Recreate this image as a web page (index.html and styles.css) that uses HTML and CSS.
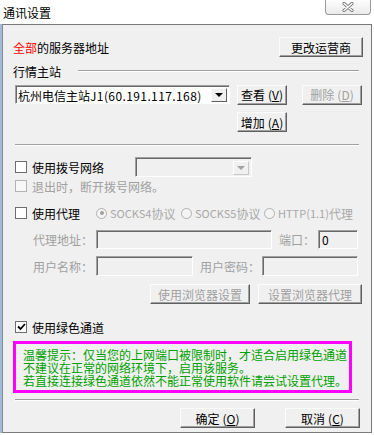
FILE: index.html
```html
<!DOCTYPE html>
<html lang="zh-CN">
<head>
  <meta charset="UTF-8">
  <title>通讯设置</title>
  <link rel="stylesheet" href="styles.css">
</head>
<body>

<div class="titlebar">
  <span class="title">通讯设置</span>
  <div class="close-btn">
    <svg width="14" height="10" viewBox="0 0 14 10">
      <path d="M3 1.5 L11 8.5 M11 1.5 L3 8.5" stroke="#7d7d7d" stroke-width="3.2" stroke-linecap="round" fill="none"/>
      <path d="M3 1.5 L11 8.5 M11 1.5 L3 8.5" stroke="#fff" stroke-width="1.4" stroke-linecap="round" fill="none"/>
    </svg>
  </div>
</div>

<div class="dialog">

  <!-- 服务器地址 -->
  <div class="row row-server">
    <span class="server-label"><span class="red">全部</span>的服务器地址</span>
    <div class="btn btn-carrier">更改运营商</div>
  </div>

  <div class="group-title">
    <span>行情主站</span>
    <div class="group-line"></div>
  </div>

  <div class="row row-select">
    <div class="combo combo-server">
      <span class="combo-text">杭州电信主站<span class="mono">J1(60.191.117.168)</span></span>
      <div class="combo-arrow"><span class="tri"></span></div>
    </div>
    <div class="btn btn-view">查看<span class="key">(<u>V</u>)</span></div>
    <div class="btn btn-delete disabled">删除<span class="key">(<u>D</u>)</span></div>
  </div>

  <div class="row row-add">
    <div class="btn btn-add">增加<span class="key">(<u>A</u>)</span></div>
  </div>

  <div class="separator"></div>

  <!-- 拨号 / 代理 -->
  <div class="row row-dial">
    <span class="check"></span>
    <span class="check-label">使用拨号网络</span>
    <div class="combo combo-dial disabled">
      <div class="combo-arrow"><span class="tri"></span></div>
    </div>
  </div>

  <div class="row row-exit disabled">
    <span class="check"></span>
    <span class="check-label">退出时，断开拨号网络。</span>
  </div>

  <div class="row row-proxy">
    <span class="check"></span>
    <span class="check-label">使用代理</span>
    <div class="radios disabled">
      <div class="radio-item r1"><span class="radio on"></span><span class="latin">SOCKS4</span>协议</div>
      <div class="radio-item r2"><span class="radio"></span><span class="latin">SOCKS5</span>协议</div>
      <div class="radio-item r3"><span class="radio"></span><span class="latin">HTTP(1.1)</span>代理</div>
    </div>
  </div>

  <div class="row row-addr">
    <span class="field-label disabled">代理地址：</span>
    <div class="input input-addr"></div>
    <span class="field-label port-label disabled">端口：</span>
    <div class="input input-port">0</div>
  </div>

  <div class="row row-user">
    <span class="field-label disabled">用户名称：</span>
    <div class="input input-user"></div>
    <span class="field-label pass-label disabled">用户密码：</span>
    <div class="input input-pass"></div>
  </div>

  <div class="row row-browser">
    <div class="btn btn-browser disabled">使用浏览器设置</div>
    <div class="btn btn-setbrowser disabled">设置浏览器代理</div>
  </div>

  <!-- 绿色通道 -->
  <div class="row row-green">
    <span class="check checked">
      <svg width="9" height="8" viewBox="0 0 9 8"><path d="M1 3.5 L3.5 6 L8 1" stroke="#000" stroke-width="1.8" fill="none"/></svg>
    </span>
    <span class="check-label">使用绿色通道</span>
  </div>

  <div class="tip">
    <div>温馨提示：仅当您的上网端口被限制时，才适合启用绿色通道</div>
    <div>不建议在正常的网络环境下，启用该服务。</div>
    <div>若直接连接绿色通道依然不能正常使用软件请尝试设置代理。</div>
  </div>

  <div class="separator"></div>

  <div class="row row-ok">
    <div class="btn btn-ok">确定<span class="key">(<u>O</u>)</span></div>
    <div class="btn btn-cancel">取消<span class="key">(<u>C</u>)</span></div>
  </div>

</div>

</body>
</html>
```

FILE: styles.css
```css
body {
  margin: 0;
  background: #fff;
  font-family: "Noto Sans CJK SC", "DejaVu Sans", sans-serif;
  font-size: 12px;
  color: #000;
  width: 374px;
  height: 435px;
  overflow: hidden;
}

/* 标题栏 */
.titlebar {
  height: 24px;
  display: flex;
  justify-content: space-between;
  align-items: center;
}
.title {
  margin-left: 3px;
  font-size: 12px;
}
.close-btn {
  align-self: flex-start;
  margin-right: 3px;
  width: 46px;
  height: 15px;
  box-sizing: border-box;
  border: 1px solid #9a9a9a;
  border-top: none;
  border-radius: 0 0 4px 4px;
  background: linear-gradient(#fdfdfd, #eaeaea);
  display: flex;
  justify-content: center;
  align-items: center;
}

/* 对话框主体 */
.dialog {
  margin-left: 2px;
  width: 370px;
  height: 409px;
  box-sizing: border-box;
  background: #f0f0f0;
  border: 1px solid #7a7a7a;
  border-left-color: #8a8a8a;
  box-shadow: -2px 0 0 #9dbbdc;
  padding: 0 8px 0 12px;
}

.row {
  display: flex;
  align-items: center;
}

.red { color: #f00; }

.disabled { color: #a0a0a0; }

.mono { letter-spacing: 0.4px; }

/* 按钮 */
.btn {
  box-sizing: border-box;
  height: 20px;
  display: flex;
  align-items: center;
  justify-content: center;
  background: #f0f0f0;
  border: 1px solid;
  border-color: #fcfcfc #5f5f5f #5f5f5f #fcfcfc;
  box-shadow: inset -1px -1px 0 #a0a0a0;
  white-space: nowrap;
}
.btn u { text-decoration: underline; }
.key { margin-left: 3px; }

/* 输入框 */
.input {
  box-sizing: border-box;
  height: 19px;
  border: 1px solid;
  border-color: #a0a0a0 #fff #fff #a0a0a0;
  box-shadow: inset 1px 1px 0 #696969;
  background: #f0f0f0;
  padding: 1px 0 0 3px;
  line-height: 16px;
}

.row-server {
  margin-top: 12px;
  height: 20px;
  justify-content: space-between;
}
.server-label { margin-left: -2px; }
.btn-carrier { width: 84px; }

.group-title {
  margin-top: 7px;
  height: 14px;
  display: flex;
  align-items: center;
  margin-left: -2px;
}
.group-line {
  flex: 1;
  margin-left: 17px;
  margin-right: 4px;
  border-top: 1px solid #a0a0a0;
  border-bottom: 1px solid #fff;
}

.row-select {
  margin-top: 7px;
  height: 19px;
}

.combo {
  box-sizing: border-box;
  height: 19px;
  display: flex;
  align-items: center;
  border: 1px solid;
  border-color: #a0a0a0 #fff #fff #a0a0a0;
  box-shadow: inset 1px 1px 0 #696969;
  background: #fff;
  padding: 2px 2px 1px 2px;
}
.combo-server { width: 215px; }
.combo-text {
  flex: 1;
  white-space: nowrap;
  overflow: hidden;
}
.combo-arrow {
  width: 16px;
  height: 14px;
  box-sizing: border-box;
  margin-left: auto;
  background: #f0f0f0;
  border: 1px solid;
  border-color: #fcfcfc #5f5f5f #5f5f5f #fcfcfc;
  display: flex;
  justify-content: center;
  align-items: center;
}
.tri {
  width: 0;
  height: 0;
  border-left: 4px solid transparent;
  border-right: 4px solid transparent;
  border-top: 4px solid #000;
}
.combo-dial {
  margin-left: 31px;
  width: 117px;
  height: 20px;
  background: #f0f0f0;
}
.combo-dial .combo-arrow {
  border-color: #fff #c8c8c8 #c8c8c8 #fff;
}
.combo-dial .tri { border-top-color: #a0a0a0; }

.btn-view {
  width: 50px;
  margin-left: 7px;
}
.btn-delete {
  width: 60px;
  margin-left: 15px;
}

.row-add {
  margin-top: 8px;
  height: 20px;
}
.btn-add {
  margin-left: 222px;
  width: 50px;
}

.separator {
  margin-top: 12px;
  margin-right: 4px;
  border-top: 1px solid #a0a0a0;
  border-bottom: 1px solid #fff;
}

/* 复选框 */
.check {
  box-sizing: border-box;
  width: 12px;
  height: 12px;
  background: #fff;
  border: 1px solid #6e6e6e;
  display: flex;
  justify-content: center;
  align-items: center;
}
.check-label { margin-left: 5px; }
.row-exit .check { border-color: #b4b4b4; background: #f7f7f7; }

.row-dial {
  margin-top: 11px;
  height: 20px;
}
.row-exit {
  margin-top: 1px;
  height: 16px;
}
.row-proxy {
  margin-top: 11px;
  height: 16px;
}

.radios {
  display: flex;
  margin-left: 16px;
  color: #a8a8a8;
  white-space: nowrap;
}
.radio-item {
  display: flex;
  align-items: center;
}
.radio-item .latin { font-size: 11px; }
.r1 { width: 85px; }
.r2 { width: 83px; }
.radio {
  box-sizing: border-box;
  width: 11px;
  height: 11px;
  border-radius: 50%;
  border: 1px solid #b0b0b0;
  background: #f4f4f4;
  margin-right: 3px;
  display: flex;
  justify-content: center;
  align-items: center;
}
.radio.on::after {
  content: '';
  width: 4px;
  height: 4px;
  border-radius: 50%;
  background: #a0a0a0;
}

.field-label { white-space: nowrap; }
.row-addr .field-label:first-child,
.row-user .field-label:first-child {
  margin-left: 18px;
  width: 63px;
}

.row-addr {
  margin-top: 9px;
  height: 19px;
}
.input-addr { width: 176px; }
.port-label {
  margin-left: 7px;
  width: 39px;
}
.input-port { width: 40px; }

.row-user {
  margin-top: 7px;
  height: 20px;
}
.row-user .input { height: 20px; }
.input-user { width: 97px; }
.pass-label {
  margin-left: 7px;
  width: 62px;
}
.input-pass { width: 96px; }

.row-browser {
  margin-top: 8px;
  height: 20px;
}
.btn-browser {
  margin-left: 135px;
  width: 100px;
}
.btn-setbrowser {
  margin-left: 8px;
  width: 104px;
}

.row-green {
  margin-top: 16px;
  height: 14px;
}

/* 提示框 */
.tip {
  margin-top: 7px;
  margin-left: -2px;
  width: 339px;
  height: 52px;
  box-sizing: border-box;
  border: 3px solid #ff00ff;
  padding: 4px 0 0 7px;
  color: #00a000;
  line-height: 13px;
  white-space: nowrap;
  overflow: hidden;
}
.tip + .separator { margin-top: 6px; }

.row-ok {
  margin-top: 7px;
  height: 20px;
}
.btn-ok {
  margin-left: 165px;
  width: 75px;
}
.btn-cancel {
  margin-left: 30px;
  width: 75px;
}
```
